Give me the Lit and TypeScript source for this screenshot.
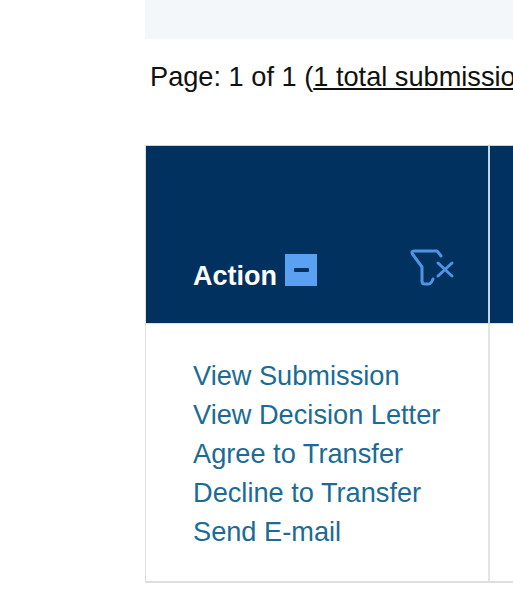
import { LitElement, html, css } from "lit";
import { customElement } from "lit/decorators.js";

@customElement("app-root")
export class AppRoot extends LitElement {
  static styles = css`
    :host {
      display: block;
      width: 513px;
      height: 600px;
      overflow: hidden;
      background: #fff;
      font-family: "Liberation Sans", Arial, sans-serif;
    }
    .wrap {
      margin-left: 145px;
      width: 420px;
    }
    .band {
      height: 39px;
      background: #f4f7fa;
    }
    .pager {
      margin-top: 23px;
      margin-left: 5px;
      font-size: 27.2px;
      line-height: 30px;
      color: #111;
      white-space: nowrap;
      height: 30px;
    }
    .pager a {
      color: #111;
      text-decoration: underline;
    }
    .table {
      margin-top: 53px;
      display: grid;
      grid-template-columns: 344px 1fr;
      border: 1px solid #dcdfe2;
      border-top-color: #c4d4e2;
      border-bottom-width: 2px;
      border-right: none;
    }
    .head {
      background: #00315f;
      height: 178px;
      border-bottom: 1px solid #d7e0e8;
      box-sizing: border-box;
      display: flex;
      align-items: flex-end;
      padding: 0 33px 32px 47px;
    }
    .head.c1 {
      border-right: 2px solid #c5d5e4;
    }
    .title {
      color: #fff;
      font-weight: 700;
      font-size: 27px;
      line-height: 29px;
    }
    .toggle {
      width: 32px;
      height: 32px;
      background: #5aa1f2;
      margin-left: 8px;
      margin-bottom: 5px;
      display: flex;
      align-items: center;
      justify-content: center;
    }
    .toggle span {
      width: 15px;
      height: 4px;
      background: #00315f;
      border-radius: 1px;
    }
    .filter {
      margin-left: auto;
      margin-bottom: 4px;
      display: block;
    }
    .cell {
      height: 257px;
      box-sizing: border-box;
      padding: 32px 20px 0 47px;
    }
    .cell.c1 {
      border-right: 2px solid #e2e4e6;
    }
    .links {
      display: flex;
      flex-direction: column;
    }
    .links a {
      color: #1b6b96;
      font-size: 27.2px;
      line-height: 39px;
      text-decoration: none;
      white-space: nowrap;
    }
  `;

  render() {
    return html`
      <div class="wrap">
        <div class="band"></div>
        <div class="pager">Page: 1 of 1 (<a href="#">1 total submissions</a>)</div>
        <div class="table">
          <div class="head c1">
            <span class="title">Action</span>
            <span class="toggle"><span></span></span>
            <svg class="filter" width="45" height="38" viewBox="0 0 45 38" fill="none" stroke="#4f94e4" stroke-width="3" stroke-linecap="round" stroke-linejoin="round">
              <path d="M27 2H4Q1 2 2.500 5L12 18V32Q12 35 15 35H19Q21 35 23 30" />
              <path d="M28 3L31 7" />
              <path d="M28 14L42 27M42 14L28 27" />
            </svg>
          </div>
          <div class="head"></div>
          <div class="cell c1">
            <div class="links">
              <a href="#">View Submission</a>
              <a href="#">View Decision Letter</a>
              <a href="#">Agree to Transfer</a>
              <a href="#">Decline to Transfer</a>
              <a href="#">Send E-mail</a>
            </div>
          </div>
          <div class="cell"></div>
        </div>
      </div>
    `;
  }
}
